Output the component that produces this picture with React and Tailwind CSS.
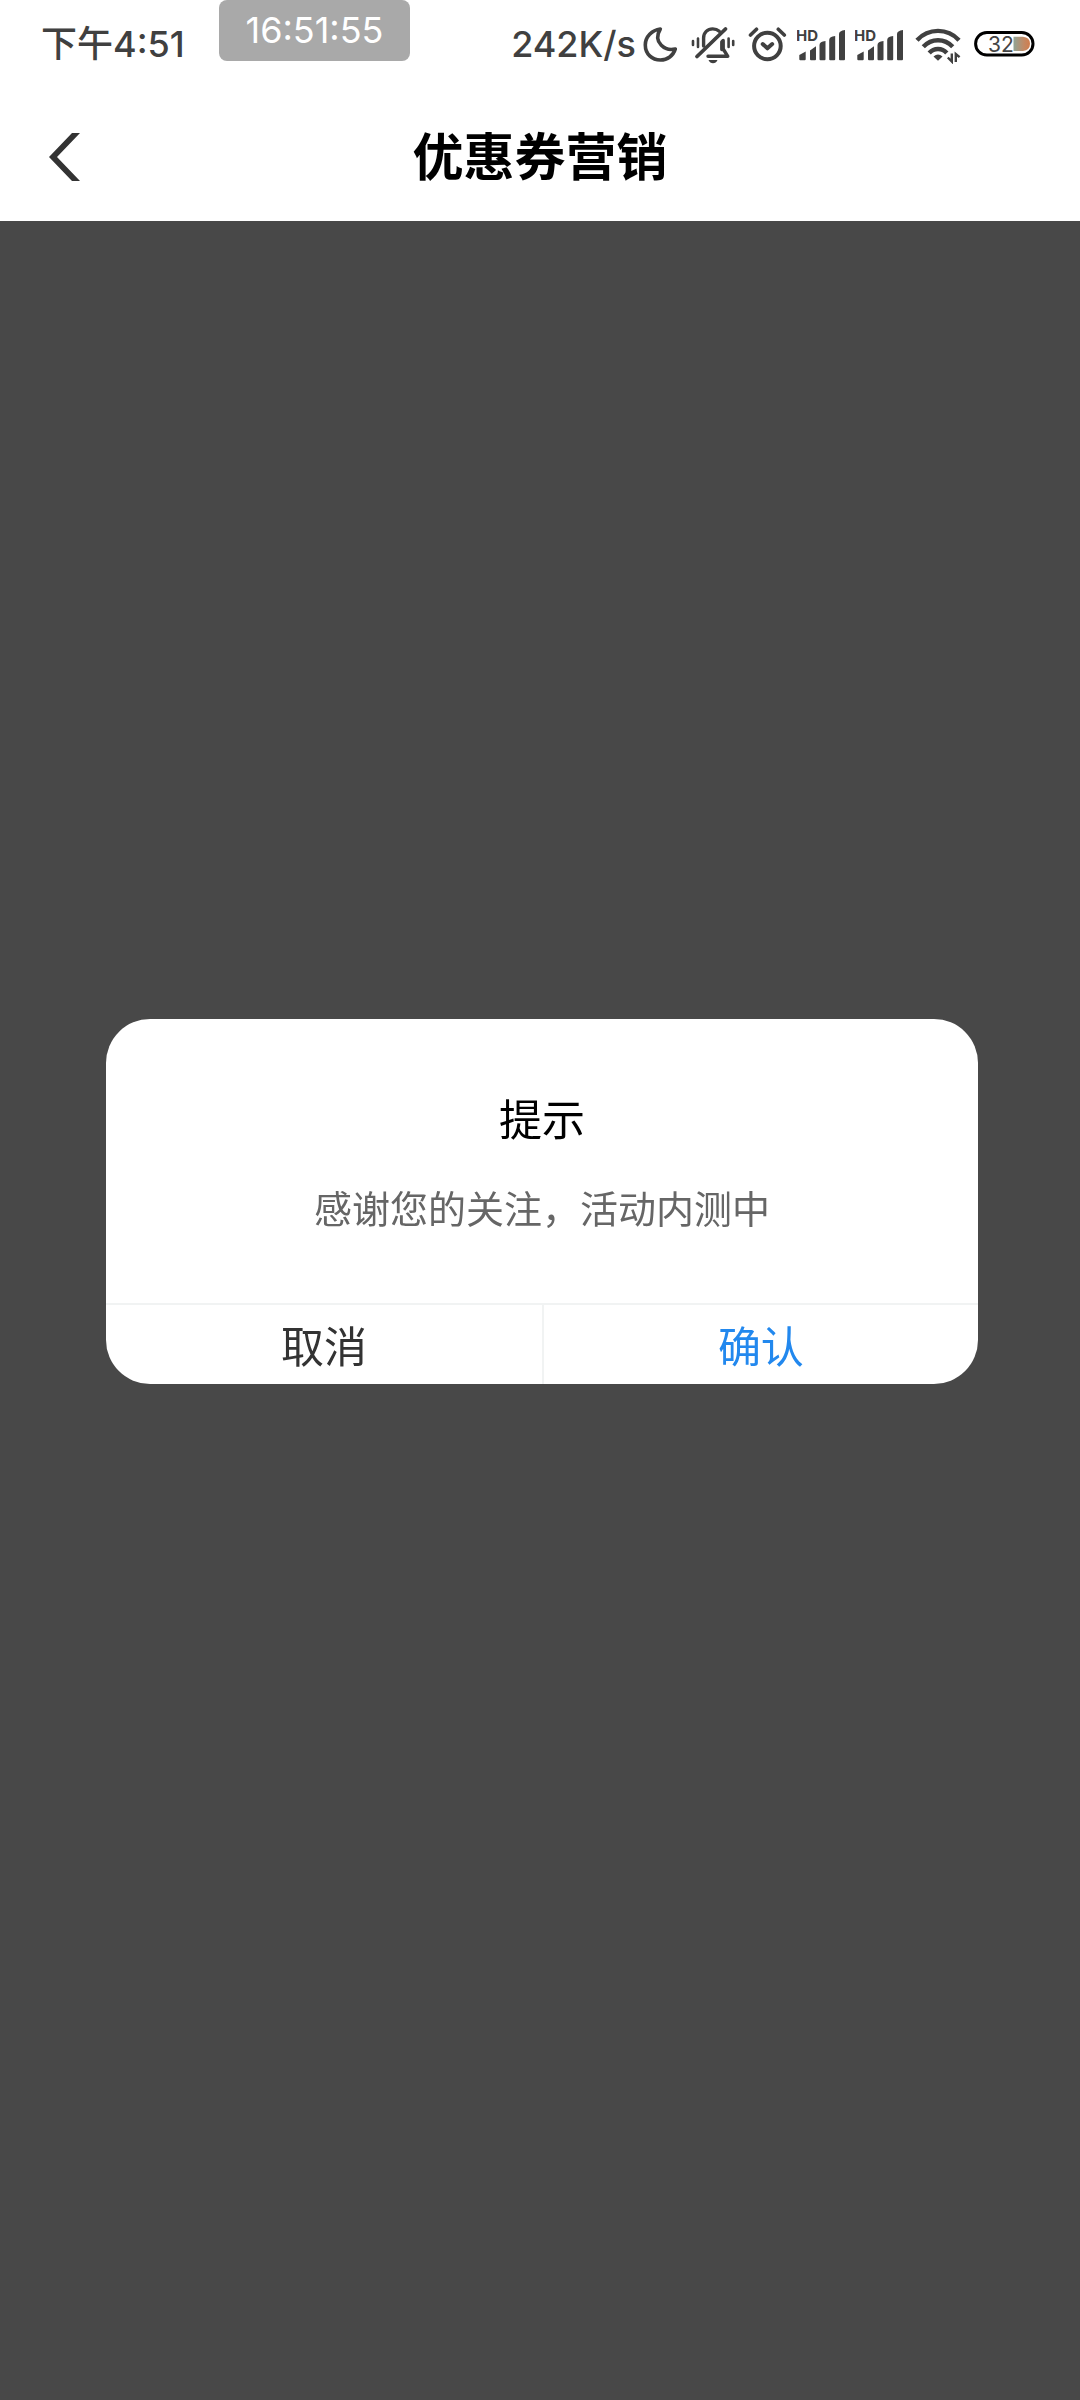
import React, { useState } from 'react';

const MoonIcon = () => (
  <svg className="w-[38px] h-10" viewBox="0 0 38 40" fill="none" stroke="currentColor" strokeWidth="3.6" strokeLinejoin="round">
    <path d="M18.3 5C10 6 3.3 12.8 3.3 21C3.3 30 10 36 18.5 36C25.5 36 31.3 31.7 33.3 25C28 26.3 23 25 19.3 21.3C15 17 14.7 11 18.3 5Z" />
  </svg>
);

const BellOffIcon = () => (
  <svg className="w-12 h-10" viewBox="0 0 48 40" fill="none" stroke="currentColor" strokeWidth="3.4" strokeLinecap="round" strokeLinejoin="round">
    <path d="M35.5 5L7 32.5" strokeWidth="3.8" />
    <path d="M13.6 22V14C13.6 8.5 17.5 4.9 22.7 4.9C25.3 4.9 27.6 5.7 29.3 7.2" />
    <path d="M18 32.3H37.8L33.2 25V16.5L31.8 18V25.5" />
    <path d="M18.5 36H27.5C26.5 38.3 25 39.3 23 39.3C21 39.3 19.5 38.3 18.5 36Z" fill="currentColor" stroke="none" />
    <path d="M3 17V21M8 14.5V23M38.6 14.5V23M43.2 17V21" strokeWidth="2.6" />
  </svg>
);

const AlarmIcon = () => (
  <svg className="w-[39px] h-10" viewBox="0 0 39 40" fill="none" stroke="currentColor" strokeWidth="4" strokeLinecap="round" strokeLinejoin="round">
    <circle cx="19.4" cy="22" r="13.3" />
    <path d="M14.7 20L19.4 24.3L24.2 20" />
    <path d="M2.5 11L8.5 5.2M30.3 5.2L36.3 11" strokeWidth="3.6" />
  </svg>
);

const SignalIcon = () => (
  <svg className="w-12 h-10" viewBox="0 0 48 40" fill="currentColor">
    <text x="-1" y="17" fontSize="15" fontWeight="700">HD</text>
    <path d="M2.3 31L8.7 27.5V35.2Q8.7 36.2 7.7 36.2H3.3Q2.3 36.2 2.3 35.2Z" />
    <path d="M13 26.5L19 22.3V35.2Q19 36.2 18 36.2H14Q13 36.2 13 35.2Z" />
    <path d="M22.5 21Q22.5 17.5 28.5 17V35.2Q28.5 36.2 27.5 36.2H23.5Q22.5 36.2 22.5 35.2Z" />
    <path d="M32.2 16Q32.2 12.5 38.2 12V35.2Q38.2 36.2 37.2 36.2H33.2Q32.2 36.2 32.2 35.2Z" />
    <path d="M42 10Q42 6.8 48 6V35.2Q48 36.2 47 36.2H43Q42 36.2 42 35.2Z" />
  </svg>
);

const WifiIcon = () => (
  <svg className="w-[49px] h-10" viewBox="0 0 49 40" fill="none" stroke="currentColor" strokeWidth="4.4">
    <path d="M4 16.2C15.5 3.8 34.5 3.8 46 16.2" />
    <path d="M10.3 22.8C18.5 14 31.5 14 39.7 22.8" />
    <path d="M16.2 29C21 23.6 29 23.6 33.8 29" />
    <path d="M20.5 32.5Q25 28.5 29.5 32.5L25 36.8Z" fill="currentColor" stroke="none" />
    <path d="M38.8 29.5V37.5L34.8 33.5M42.8 38V30L46.6 33.2" strokeWidth="2.4" />
  </svg>
);

const BatteryIcon = ({ level }) => (
  <svg className="w-[63px] h-10" viewBox="0 0 63 40">
    <defs>
      <linearGradient id="charge" x1="0" x2="1" y1="0" y2="0">
        <stop offset="0" stopColor="#8fa596" />
        <stop offset="0.6" stopColor="#c08a66" />
        <stop offset="1" stopColor="#d17c4c" />
      </linearGradient>
    </defs>
    <rect x="3.6" y="8.5" width="57.4" height="22.6" rx="11.3" fill="#fff" stroke="#000" strokeWidth="3" />
    <path d="M41.5 12.8H51Q58 13.5 58 19.8Q58 26.2 51 27H41.5Z" fill="url(#charge)" />
    <text x="16" y="28" fontSize="21" fill="#444">{level}</text>
  </svg>
);

const StatusBar = () => (
  <div className="relative flex items-center justify-between h-22 pl-[41px] pr-[45px] text-[#404040] font-['Inter','Noto_Sans_CJK_SC',sans-serif]">
    <div className="text-[36px] leading-none font-medium">下午4:51</div>
    <div className="absolute top-0 left-[219px] w-[191px] h-[61px] rounded-lg bg-[#a9a9a9] text-white text-[36px] leading-[61px] text-center">
      16:51:55
    </div>
    <div className="flex items-center gap-[10px]">
      <span className="-mr-1 text-[36px] leading-none font-medium">242K/s</span>
      <MoonIcon />
      <BellOffIcon />
      <AlarmIcon />
      <SignalIcon />
      <SignalIcon />
      <WifiIcon />
      <BatteryIcon level={32} />
    </div>
  </div>
);

const NavBar = () => (
  <header className="grid grid-cols-[1fr_auto_1fr] items-center h-[133px] pt-1 px-[49px]">
    <button type="button" aria-label="返回" className="justify-self-start">
      <svg className="w-[31px] h-12" viewBox="0 0 31 48" fill="#333">
        <path d="M23 0H31L8 24L31 48H23L0 24Z" />
      </svg>
    </button>
    <h1 className="pb-1 text-[51px] leading-none font-bold text-black">优惠券营销</h1>
  </header>
);

const Dialog = ({ title, message, onClose }) => (
  <div className="fixed inset-0 flex items-center justify-center pt-[3px] pl-1">
    <div role="dialog" aria-label={title} className="w-[81%] rounded-[44px] bg-white overflow-hidden text-center">
      <div className="pt-[68px] pb-[67px]">
        <h2 className="text-[43px] leading-[60px] text-black">{title}</h2>
        <p className="mt-[31px] text-[38px] leading-[58px] text-[#666]">{message}</p>
      </div>
      <div className="grid grid-cols-2 border-t-2 border-[#f1f3f3] text-[43px] leading-[79px]">
        <button type="button" onClick={onClose} className="text-[#333]">取消</button>
        <button type="button" onClick={onClose} className="border-l-2 border-[#f1f3f3] text-[#2288ee]">确认</button>
      </div>
    </div>
  </div>
);

const App = () => {
  const [open, setOpen] = useState(true);

  return (
    <div className="flex flex-col min-h-screen bg-white font-['Noto_Sans_CJK_SC',sans-serif]">
      <StatusBar />
      <NavBar />
      <main className="flex-1 bg-[#484848]" />
      {open && (
        <Dialog title="提示" message="感谢您的关注，活动内测中" onClose={() => setOpen(false)} />
      )}
    </div>
  );
};

export default App;
